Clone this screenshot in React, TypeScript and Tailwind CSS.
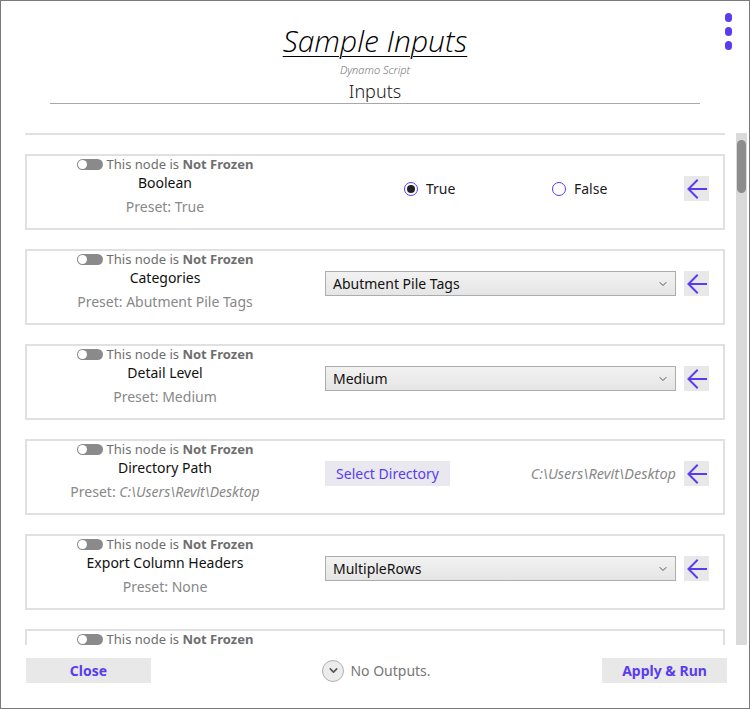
import { ChevronDown } from 'lucide-react';

// ── Data ─────────────────────────────────────────────────────────

type NodeInput = {
  name: string;
  preset: React.ReactNode;
  kind: 'bool' | 'select' | 'dir';
  value?: string;
};

const INPUTS: NodeInput[] = [
  { name: 'Boolean', preset: 'True', kind: 'bool' },
  { name: 'Categories', preset: 'Abutment Pile Tags', kind: 'select', value: 'Abutment Pile Tags' },
  { name: 'Detail Level', preset: 'Medium', kind: 'select', value: 'Medium' },
  {
    name: 'Directory Path',
    preset: <span className="italic">C:\Users\Revit\Desktop</span>,
    kind: 'dir',
    value: 'C:\\Users\\Revit\\Desktop',
  },
  { name: 'Export Column Headers', preset: 'None', kind: 'select', value: 'MultipleRows' },
  { name: 'Family Type', preset: 'None', kind: 'select', value: '' },
];

const FONT = { fontFamily: '"Segoe UI", "Noto Sans", sans-serif' };

// ── Pieces ───────────────────────────────────────────────────────

function Toggle() {
  return (
    <span className="inline-flex h-[11px] w-[26px] items-center rounded-full bg-[#8a8a8a] px-[1px]">
      <span className="h-[9px] w-[9px] rounded-full bg-white" />
    </span>
  );
}

function BackArrow() {
  return (
    <button
      type="button"
      className="flex h-[25px] w-[25px] shrink-0 items-center justify-center bg-[#e8e8e8]"
    >
      <svg width="22" height="22" viewBox="0 0 22 22" fill="none">
        <path
          d="M20 11H3M11 2.5L2.5 11L11 19.5"
          stroke="#5a3cf0"
          strokeWidth="2"
          strokeLinecap="square"
        />
      </svg>
    </button>
  );
}

function Radio({ checked, label }: { checked?: boolean; label: string }) {
  return (
    <label className="flex items-center gap-[8px] text-[14px] text-[#1a1a1a]">
      <span className="flex h-[14px] w-[14px] items-center justify-center rounded-full border border-[#5a3cf0] bg-white">
        {checked && <span className="h-[8px] w-[8px] rounded-full bg-[#222]" />}
      </span>
      {label}
    </label>
  );
}

function Dropdown({ value }: { value: string }) {
  return (
    <div className="flex h-[25px] flex-1 items-center justify-between border border-[#acacac] bg-gradient-to-b from-[#f2f2f2] to-[#e5e5e5] pl-[7px] pr-[6px]">
      <span className="text-[14px] text-[#111]">{value}</span>
      <ChevronDown className="h-[12px] w-[12px] text-[#555]" strokeWidth={2} />
    </div>
  );
}

function InputCard({ input }: { input: NodeInput }) {
  return (
    <div className="flex h-[76px] shrink-0 items-start border-2 border-[#e0e0e0] bg-white">
      <div className="flex w-[276px] shrink-0 flex-col items-center">
        <div className="flex h-[17px] items-center gap-[4px] text-[13px] text-[#6e6e6e]">
          <Toggle />
          <span>
            This node is <b className="font-bold">Not Frozen</b>
          </span>
        </div>
        <div className="text-[14px] leading-[20px] text-[#111]">{input.name}</div>
        <div className="mt-[4px] text-[14px] leading-[20px] text-[#888]">Preset: {input.preset}</div>
      </div>

      <div className="ml-[22px] flex flex-1 items-center gap-[8px] pr-[14px] pt-[20px]">
        {input.kind === 'bool' && (
          <div className="flex flex-1 items-center pl-[79px]">
            <div className="w-[148px]">
              <Radio checked label="True" />
            </div>
            <Radio label="False" />
          </div>
        )}
        {input.kind === 'select' && <Dropdown value={input.value ?? ''} />}
        {input.kind === 'dir' && (
          <div className="flex flex-1 items-center justify-between">
            <button
              type="button"
              className="h-[25px] w-[125px] bg-[#e8e8ee] text-[14px] text-[#5a3cf0]"
            >
              Select Directory
            </button>
            <span className="text-[14.5px] italic text-[#888]">{input.value}</span>
          </div>
        )}
        <BackArrow />
      </div>
    </div>
  );
}

// ── App ──────────────────────────────────────────────────────────

export default function App() {
  return (
    <div
      className="relative flex h-[709px] w-[750px] flex-col overflow-hidden border border-[#7a7a7a] bg-white"
      style={FONT}
    >
      {/* Menu dots */}
      <div className="absolute right-[17px] top-[12px] flex flex-col gap-[5px]">
        <span className="h-[9px] w-[7px] rounded-full bg-[#5a3cf0]" />
        <span className="h-[9px] w-[7px] rounded-full bg-[#5a3cf0]" />
        <span className="h-[9px] w-[7px] rounded-full bg-[#5a3cf0]" />
      </div>

      {/* Header */}
      <header className="flex shrink-0 flex-col items-center pt-[21px]">
        <h1
          className="text-[30px] font-light italic leading-[38px] text-black underline decoration-[1px] underline-offset-[4px]"
          style={{ fontFamily: '"Open Sans", "Noto Sans", sans-serif' }}
        >
          Sample Inputs
        </h1>
        <div className="mt-[3px] text-[11px] font-light italic leading-[14px] text-[#777]">Dynamo Script</div>
        <div className="mt-[2px] text-[18px] font-light leading-[24px] text-[#222]">Inputs</div>
        <div className="h-px w-[650px] bg-[#a8a8a8]" />
      </header>

      {/* Scrollable inputs */}
      <div className="mt-[29px] flex h-[512px] shrink-0">
        <div className="ml-[24px] flex w-[700px] flex-col gap-[19px] overflow-hidden border-t-2 border-[#e0e0e0] pt-[19px]">
          {INPUTS.map((input) => (
            <InputCard key={input.name} input={input} />
          ))}
        </div>
        <div className="ml-[11px] flex w-[11px] flex-col bg-[#dadada] pt-[7px]">
          <div className="mx-auto h-[53px] w-[9px] rounded-full bg-[#8c8c8c]" />
        </div>
      </div>

      {/* Footer */}
      <footer className="mt-[13px] flex items-center justify-between pl-[25px] pr-[22px]">
        <button type="button" className="h-[25px] w-[125px] bg-[#e8e8e8] text-[14px] font-bold text-[#5a3cf0]">
          Close
        </button>
        <div className="flex items-center gap-[6px] text-[14px] text-[#777]">
          <span className="flex h-[22px] w-[22px] items-center justify-center rounded-full border border-[#b0b0b0] bg-[#ececec]">
            <ChevronDown className="h-[13px] w-[13px] text-[#555]" strokeWidth={3} />
          </span>
          No Outputs.
        </div>
        <button type="button" className="h-[25px] w-[125px] bg-[#e8e8e8] text-[14px] font-bold text-[#5a3cf0]">
          Apply &amp; Run
        </button>
      </footer>
    </div>
  );
}
